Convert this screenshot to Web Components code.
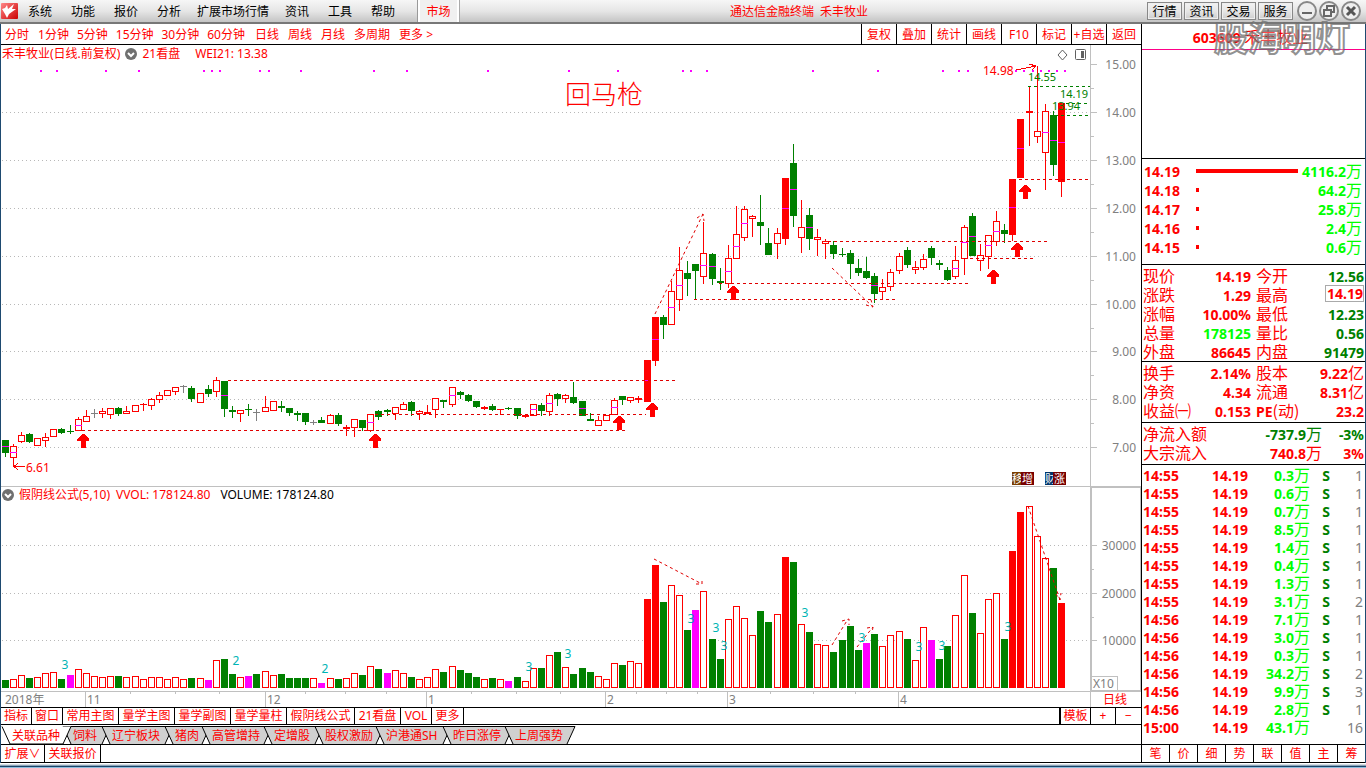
<!DOCTYPE html>
<html lang="zh-CN">
<head>
<meta charset="utf-8">
<title>通达信金融终端 禾丰牧业</title>
<style>
html,body{margin:0;height:100%}
body{font:12px/16px "Noto Sans","Noto Sans CJK SC",sans-serif;color:#f00;background:#fff}
</style>
</head>
<body>
<trading-terminal></trading-terminal>
<script>
const BASE = `*{box-sizing:border-box}
button,a{font:inherit;color:inherit;background:none;border:0;padding:0;margin:0;text-decoration:none;white-space:nowrap;cursor:pointer}
b{font:700 14px/18px "Noto Sans","Noto Sans CJK SC",sans-serif}
.g{color:#008000}.l{color:#0f0}`;
function define(name, css, html) {
  customElements.define(name, class extends HTMLElement {
    connectedCallback() {
      if (this.shadowRoot) return;
      const root = this.attachShadow({mode: 'open'});
      root.innerHTML = `<style>${BASE}${css}</style>` + (typeof html === 'function' ? html(this) : html);
    }
  });
}
const each = (list, fn) => list.map(fn).join('');

/* ---------- menu bar ---------- */
define('menu-bar', `
:host{display:flex;height:24px;background:linear-gradient(#f6f6f6,#e6e6e6 50%,#c4c4c4);border-bottom:2px solid #777;color:#000;align-items:center;padding-left:1px;position:relative}
.logo{width:17px;height:16px;margin-right:10px}
nav{display:flex}
nav button{text-align:left;padding-top:1px}
.m{width:43px}.n{width:40px}.w{width:88px}
nav .market{color:#f00;height:22px;width:41px;text-align:center;border-left:2px solid #fff;border-right:2px solid #fff;box-shadow:-1px 0 #999,1px 0 #aaa;background:#f0f0f0;margin-left:4px}
h1{font:inherit;color:#f00;margin:0;flex:1;text-align:center;padding:1px 8px 0 0}
.side{display:flex;gap:2px;padding-right:5px;align-items:center}
.side button{width:35px;height:18px;border:1px solid #888;box-shadow:inset 0 0 0 1px #eee;line-height:17px}
.side .c{width:20px;height:20px;border:0;box-shadow:none}
.side .first{margin-left:2px}
svg{display:block}`,
`<svg class="logo" viewBox="0 0 17 16"><defs><linearGradient id="q" x2="1" y2="1"><stop stop-color="#f88"/><stop offset="1" stop-color="#c00"/></linearGradient></defs><rect width="17" height="16" rx="1" fill="url(#q)"/><path d="M1 6l3-1 2-3 1 4 6-5-2 5 4 0-7 5-2 4-2-4z" fill="#fff"/></svg>
<nav><button class="m">系统</button><button class="m">功能</button><button class="m">报价</button><button class="n">分析</button><button class="w">扩展市场行情</button><button class="m">资讯</button><button class="m">工具</button><button class="m">帮助</button><button class="market">市场</button></nav>
<h1>通达信金融终端&nbsp; 禾丰牧业</h1>
<div class="side"><button>行情</button><button>资讯</button><button>交易</button><button>服务</button>
<button class="c first" aria-label="最小化"><svg viewBox="0 0 20 20"><circle cx="10" cy="10" r="9" fill="#eee" stroke="#888" stroke-width="2"/><path d="M5 12h10" stroke="#666" stroke-width="2"/></svg></button>
<button class="c" aria-label="还原"><svg viewBox="0 0 20 20"><circle cx="10" cy="10" r="9" fill="#eee" stroke="#888" stroke-width="2"/><path d="M8 8V5h7v6h-3M5 9h7v6H5z" fill="none" stroke="#666" stroke-width="2"/></svg></button>
<button class="c" aria-label="关闭"><svg viewBox="0 0 20 20"><circle cx="10" cy="10" r="9" fill="#eee" stroke="#888" stroke-width="2"/><path d="M6 6l8 8M14 6l-8 8" stroke="#555" stroke-width="3"/></svg></button></div>`);

/* ---------- period bar ---------- */
define('period-bar', `
:host{display:flex;height:21px;border-bottom:1px solid #000;background:#fff;align-items:center}
button{padding-top:1px}
.a,.b{display:flex}.a{gap:8px;padding:0 10px 0 4px}.a :first-child{margin-right:1px}.b{gap:9px}
.tools{margin-left:auto;display:flex;height:20px}
.tools button{width:35px;border-left:1px solid #000}`,
`<div class="a">${each(['分时','1分钟','5分钟','15分钟','30分钟','60分钟'], t => `<button>${t}</button>`)}</div>
<div class="b">${each(['日线','周线','月线','多周期','更多 &gt;'], t => `<button>${t}</button>`)}</div>
<div class="tools">${each(['复权','叠加','统计','画线','F10','标记','+自选','返回'], t => `<button>${t}</button>`)}</div>`);

/* ---------- series: colour, high, open/close box, low, mid mark ---------- */
const CANDLES = `g440,440,453,457,446 r444,446,458,467,452 r432,435,442,443 g433,434,442,443 r438,438,446,446 r433,437,441,447 r429,429,437,437 g428,429,433,434 g425,431,432,434 r417,419,431,431,425
r410,416,422,422 x409,413,414,418 r408,411,414,418 r408,408,415,419 g407,408,414,416 r406,411,414,414 r405,405,412,412 s403,404,405,411 r398,399,406,410 r392,395,400,403
r390,390,396,396 r387,387,392,395 x385,386,387,393 g386,388,399,402 r393,393,403,403 g385,389,394,397 r377,380,392,397 g381,381,409,417,395 g406,410,412,418 r410,410,414,422
g404,409,410,416 x409,412,413,421 r396,407,412,412 r401,401,411,411 g401,406,408,412 g408,408,413,416 g411,413,415,421 g413,413,422,425 x420,422,423,425 g417,420,423,423
r414,415,424,424 g413,415,424,426 s425,427,429,436 r419,419,428,437 g420,420,428,431 r414,414,431,432,422 g410,411,417,420 g409,410,412,416 r407,407,414,420 r402,404,410,410
g401,402,411,416 r410,411,414,420 s405,412,414,414 r398,398,410,418 g400,400,402,408 r387,387,405,407,395 g391,392,395,399 g394,395,401,402 g401,401,407,408 s406,407,409,410
g404,406,410,411 s409,409,410,415 g407,408,409,410 g408,408,416,419 s415,415,417,418 r404,404,416,416,409 g403,405,411,416 r393,395,412,416,403 g393,394,399,406 r394,395,399,403
g382,397,403,404 g401,401,416,416,408 g413,419,421,421 r416,420,426,426 r415,415,421,421 r398,400,415,415,407 g396,396,400,405 r397,397,401,403 s396,398,400,403 s360,360,402,402,380
s317,317,361,366,339 g315,317,325,339 r281,291,325,325,307 r247,270,300,311,285 g261,273,279,296 g264,264,271,300 r222,253,277,284,265 g253,254,279,285,266 g268,281,283,290 r245,258,284,288,271
r206,234,259,259,246 r206,209,238,241,223 r215,216,219,237 g195,222,226,245 g228,243,255,255 r228,233,244,259 s178,178,239,245,208 g144,163,216,227,189 r200,227,238,253 g208,215,239,250,227
r229,237,240,256 r239,241,244,259 g241,245,254,259 g248,254,255,257 g250,253,264,279 g259,268,273,276 g257,271,278,279 g273,276,294,303,285 r279,287,292,299 r269,272,287,291
r253,256,271,274 g247,250,265,268 r261,267,270,274 r254,259,268,270 g246,248,258,265 g260,263,265,270 g267,270,280,281 r246,260,277,279,268 r225,227,259,275,242 g213,216,256,256,236
r244,255,261,271 r235,235,257,269,245 r211,221,242,246,231 g224,230,234,243 s179,179,235,241,207 s119,119,178,178,148 s86,111,113,146 r66,131,137,143 r104,111,153,190,132 g111,115,165,176,140 s103,103,182,197,142`.split(/\s+/);
const VOLUMES = `g680 r679 r675 g678 r677 r673 r672 g679 m675 r669 r673 r676 r677 r676 g676 r677 r676 r679 r677 r677 r679 r677 r679 g678 r678 m680 r660 g659 g674 r677 m676 g674 r671 r675 g674 g678 g678 g678 r678 m683 r678 g679
r678 r673 g675 r666 g669 m673 r670 r673 g677 r679 r677 r669 g672 r666 g670 g673 g677 r679 g678 r679 m681 g677 r681 r668 g668 r655 g652 r667 g674 g668 g672 r676 r679 r663 g665 r661 r663
s599 s565 g602 r585 r595 g630 m610 r591 g639 g659 r619 r606 r618 r635 g611 g622 r614 s557 g562 r624 g632 r644 r645 g652 g640 g626 g650 m643 g634 r646 r635 r631 g639 r660 r627 m640 g659 g646 r615 r575 g613 r633 r599 r593 g639 s551 s512 r506 r536 r558 g568 s603`.split(/\s+/);
const COLOR = {g:'#008000', r:'#f00', s:'#f00', x:'#808080', m:'#f0f'};
const left = i => 2 + Math.floor(i * 8.127 + .04);
const rect = (x, y, w, h, f) => `<rect x="${x}" y="${y}" width="${w}" height="${h}" fill="${f}"/>`;
const box = (x, y, h) => h < 3 ? rect(x, y, 7, h, '#f00') : `<rect x="${x + .5}" y="${y + .5}" width="6" height="${h - 1}" fill="#fff" stroke="#f00"/>`;
const grid = y => `<path d="M2 ${y}.5H1090" stroke="#b8b8b8" stroke-dasharray="1 3"/>`;
const level = (x1, x2, y, c = '#e00000') => `<path d="M${x1} ${y}.5H${x2}" stroke="${c}" stroke-dasharray="3 3"/>`;
const text = (x, y, t, extra = '') => `<text x="${x}" y="${y}" ${extra}>${t}</text>`;
const trend = d => `<path d="${d}" stroke="#e00000" stroke-dasharray="3 3" fill="none" shape-rendering="auto"/>`;
const CHART = `:host{display:block;position:relative}
svg.plot{display:block;width:100%;height:auto;shape-rendering:crispEdges}
text{font-size:12px;fill:#808080;text-rendering:auto}
.e{text-anchor:end}.r{fill:#f00}.gr{fill:#008000;font-size:11px}.cy{fill:#00b4b4;text-anchor:middle}
.legend{position:absolute;left:1px;top:1px;display:flex;align-items:center;height:16px}
.legend svg{display:block;width:12px;height:12px}`;
const FOLD = `<button aria-label="展开"><svg viewBox="0 0 12 12"><circle cx="6" cy="6" r="6" fill="#707070"/><path d="M3 5l3 3 3-3" fill="none" stroke="#fff" stroke-width="2"/></svg></button>`;

define('price-chart', CHART + `.legend button{margin:0 5px 0 5px}.wei{margin-left:15px}
.big{font:300 26px "Noto Sans CJK SC",sans-serif;fill:#f00}.tag{font-size:11px;fill:#fff}`, () => {
  const ys = [64,112,160,208,256,304,351,399,447];
  let s = each(ys.slice(1), grid);
  s += rect(1090, 45, 1, 441, '#c0c0c0') + rect(1, 486, 1140, 1, '#c0c0c0');
  ys.forEach((y, k) => {
    s += rect(1091, y, 6, 1, '#c0c0c0') + text(1136, y + 5, (15 - k).toFixed(2), 'class="e"');
    if (k < 8) s += rect(1091, y + 24, 3, 1, '#c0c0c0');
  });
  s += each([40,56,105,138,203,211,219,259,268,300,373,406,487,568,617,682,690,706,812,877,942,958,967,1015,1023,1032,1040,1048,1056,1064], x => rect(x, 70, 2, 2, '#f0f'));
  CANDLES.forEach((c, i) => {
    const k = c[0], x = left(i), [h, t, b, l, m] = c.slice(1).split(',').map(Number);
    s += rect(x + 3, h, 1, l - h, COLOR[k]);
    s += k === 'r' ? box(x, t, b - t) : rect(x, t, 7, b - t, COLOR[k]);
    if (m) s += rect(x, m, 7, 1, '#f0f');
  });
  s += level(228,678,380) + level(82,626,430) + level(375,646,414) + level(719,968,283) + level(694,896,299)
    + level(828,1049,241) + level(964,1036,258) + level(1013,1090,179)
    + level(1028,1090,86,'#008000') + level(1066,1088,103,'#008000') + level(1055,1090,115,'#008000');
  s += each([[83,434],[375,434],[619,416],[652,403],[733,286],[1025,185],[1017,243],[993,270]], p => `<path transform="translate(${p})" d="M-1 0h2l5 5v2h-3v7h-5v-7h-4v-2z" fill="#f00"/>`);
  s += trend('M655 314L703 214M697 218l6-4 1 7') + trend('M832 268L873 307M866 305l7 2-2-7');
  s += `<path d="M1016 70l20-4m-7-2l7 2-4 4M25 466.500H14m4-3l-4 3 4 3" stroke="#f00" fill="none"/>`;
  s += text(983, 75, '14.98', 'class="r"') + text(26, 472, '6.61', 'class="r"')
    + text(1028, 81, '14.55', 'class="gr"') + text(1060, 98, '14.19', 'class="gr"') + text(1052, 110, '13.94', 'class="gr"')
    + text(565, 104, '回马枪', 'class="big"');
  s += rect(1012,472,10,13,'#7b3f00') + text(1012,483,'移','class="tag"') + rect(1021,472,13,13,'#780000') + text(1022,483,'增','class="tag"')
    + rect(1045,472,9,13,'#003468') + text(1045,483,'财','class="tag"') + rect(1053,472,13,13,'#780000') + text(1054,483,'涨','class="tag"');
  s += `<g fill="none" stroke="#606060" shape-rendering="auto"><path d="M1062.500 50l4.500 5-4.500 5-4.500-5z"/><rect x="1075.500" y="49.500" width="10" height="10" rx="1"/><path d="M1082.500 51v7" stroke-width="3"/></g>`;
  return `<svg class="plot" viewBox="1 45 1140 441">${s}</svg>
  <div class="legend">禾丰牧业(日线.前复权)${FOLD}21看盘<span class="wei">WEI21: 13.38</span></div>`;
});

define('volume-chart', CHART + `.legend button{margin-right:5px}.v{margin-left:6px}.k{margin-left:10px;color:#000}`, () => {
  let s = rect(1, 486, 1140, 1, '#c0c0c0') + rect(1, 691, 1140, 1, '#c0c0c0') + rect(1090, 486, 1, 221, '#c0c0c0');
  s += `<rect x="1091" y="487" width="50" height="204" fill="none" stroke="#c0c0c0" stroke-width="2"/>`;
  [545,593,640].forEach((y, k) => {
    s += grid(y) + rect(1091, y, 6, 1, '#c0c0c0') + text(1136, y + 5, 30000 - k * 10000, 'class="e"');
    if (k < 2) s += rect(1091, y + 24, 3, 1, '#c0c0c0');
  });
  s += `<path d="M1091 676.500h26v14" fill="none" stroke="#c0c0c0"/>` + text(1093, 688, 'X10');
  VOLUMES.forEach((v, i) => {
    const y = +v.slice(1);
    s += v[0] === 'r' ? box(left(i), y, 688 - y) : rect(left(i), y, 7, 688 - y, COLOR[v[0]]);
  });
  s += trend('M654 559L702 584M696 584h6v-6') + trend('M832 645L848 619M842 621l7-2v6') + trend('M857 647L873 627M867 628l6-1-1 6') + trend('M1028 506L1060 600M1056 594l4 6 1-7');
  s += each([[65,669,3],[236,665,2],[325,673,2],[529,671,3],[568,658,3],[691,623,3],[716,632,3],[724,650,3],[805,617,3],[862,642,3],[919,651,3],[942,650,3],[1008,631,3]], p => text(p[0], p[1], p[2], 'class="cy"'));
  s += each([[85,'11'],[265,'12'],[426,'1'],[605,'2'],[727,'3'],[898,'4']], p => rect(p[0], 692, 1, 15, '#c0c0c0') + text(p[0] + 2, 704, p[1]));
  s += each([130,175,219,305,345,386,471,516,560,636,666,697,770,813,855], x => rect(x, 692, 1, 2, '#c0c0c0'));
  s += text(5, 704, '2018年') + text(1103, 704, '日线', 'class="r"');
  return `<svg class="plot" viewBox="1 486 1140 221">${s}</svg>
  <div class="legend">${FOLD}假阴线公式(5,10)<span class="v">VVOL: 178124.80</span><span class="k">VOLUME: 178124.80</span></div>`;
});

/* ---------- bottom bars ---------- */
define('indicator-bar', `
:host{display:flex;height:18px;border:solid #000;border-width:1px 0}
button{height:16px;line-height:16px;border-right:1px solid #000}
.end{margin-left:auto;border-left:2px solid #000;display:flex}
.end button:last-child{border:0}`,
`${each([['指标',31],['窗口',31],['常用主图',56],['量学主图',56],['量学副图',56],['量学量柱',56],['假阴线公式',68],['21看盘',46],['VOL',31],['更多',32]], b => `<button style="width:${b[1]}px">${b[0]}</button>`)}
<div class="end"><button style="width:30px">模板</button><button style="width:25px">+</button><button style="width:25px">−</button></div>`);

define('sheet-tab', `
:host{display:block;position:relative;height:18px}
:host([active]){z-index:1}
button{position:relative;width:100%;height:18px;line-height:17px;padding-left:10px;text-align:left;display:block}
svg{position:absolute;left:0;top:0;overflow:visible}`,
el => { const w = +el.getAttribute('w');
  return `<svg width="${w + 9}" height="18"><path d="M0 .5L8 18H${w}L${w + 8} .5z" fill="${el.hasAttribute('active') ? '#fff' : '#d0d0d0'}"/><path d="M${el.hasAttribute('active') ? `0 .5L8 18H${w}L${w + 8} .5` : `8 18L0 .5H${w + 8}L${w} 18`}" fill="none" stroke="#000" stroke-width="1"/></svg><button><slot></slot></button>`; });

define('sheet-tabs', `:host{display:flex;height:20px;padding:1px 0 0 1px;border-bottom:1px solid #000}`,
`${each([['关联品种',61,1],['饲料',39],['辽宁板块',63],['猪肉',37],['高管增持',62],['定增股',51],['股权激励',61],['沪港通SH',67],['昨日涨停',62],['上周强势',62]], t => `<sheet-tab w="${t[1]}" style="width:${t[1]}px"${t[2] ? ' active' : ''}>${t[0]}</sheet-tab>`)}`);

define('extra-bar', `:host{display:flex;height:18px;border-bottom:1px solid #000}button{border-right:1px solid #000;line-height:17px;height:17px;width:56px}.x{width:44px}`,
`<button class="x">扩展∨</button><button>关联报价</button>`);

/* ---------- quote panel ---------- */
define('stock-title', `:host{display:block;height:26px;border-bottom:1px solid #f08;text-align:center;padding:3px 6px 0 0;position:relative}
h2{font:16px/18px "Noto Sans CJK SC",sans-serif;margin:0}h2 b{line-height:1px}
.mark{position:absolute;left:72px;top:-12px;font:700 34px/50px "Noto Sans CJK SC",sans-serif;color:rgba(255,255,255,.3);-webkit-text-stroke:2px rgba(110,110,110,.75);z-index:3;white-space:nowrap}`,
`<h2><b>603609</b> 禾丰牧业</h2><div class="mark">股海明灯</div>`);

const CELLS = `table{border-collapse:collapse;width:100%;table-layout:fixed}td,th{padding:0;font:16px/18px "Noto Sans CJK SC",sans-serif;white-space:nowrap;text-align:right;vertical-align:middle}
th,.t{text-align:left}tr{height:19px}td b,th b{line-height:1px}`;
const amt = v => /[万亿]$/.test(v) ? `<b>${v.slice(0, -1)}</b>${v.slice(-1)}` : `<b>${v}</b>`;

define('order-book', CELLS + `:host{display:block;height:106px;padding:1px 3px 0 2px;border-bottom:1px solid #000}
i{display:block;background:#f00;height:4px;width:3px;margin-top:2px}i.full{width:100%}`,
`<table><colgroup><col style="width:52px"><col style="width:102px"><col></colgroup>
${each([['14.19','4116.2万'],['14.18','64.2万'],['14.17','25.8万'],['14.16','2.4万'],['14.15','0.6万']], (r, k) => `<tr><th scope="row"><b>${r[0]}</b></th><td><i${k ? '' : ' class="full"'}></i></td><td class="l">${amt(r[1])}</td></tr>`)}</table>`);

define('quote-grid', CELLS + `:host{display:block;padding:0 1px 1px 1px;border-bottom:1px solid #000}
:host([pad]){padding-bottom:3px}.box b{display:inline-block;line-height:15px;height:17px;border:1px solid #aaa;padding:0 0 0 1px;vertical-align:top}th.s{padding-left:5px}`,
el => `<table><colgroup><col style="width:50px"><col style="width:58px"><col style="width:48px"><col></colgroup>${each(el.getAttribute('rows').split(';'), r => { const c = r.split(' ');
  return `<tr><th>${c[0]}</th><td class="${c[2]}">${amt(c[1])}</td><th class="s">${c[3].replace('PE', '<b>PE</b>')}</th><td class="${c[5] || ''}">${amt(c[4])}</td></tr>`; })}</table>`);

define('fund-flow', CELLS + `:host{display:block;padding:0 1px 3px 1px;border-bottom:1px solid #000}`,
`<table><colgroup><col style="width:80px"><col style="width:99px"><col></colgroup>
<tr><th>净流入额</th><td class="g">${amt('-737.9万')}</td><td class="g"><b>-3%</b></td></tr>
<tr><th>大宗流入</th><td>${amt('740.8万')}</td><td><b>3%</b></td></tr></table>`);

define('tick-list', CELLS + `:host{display:block;height:280px;padding:0 2px 0 1px;border-bottom:1px solid #000}tr{height:18px}td,th{line-height:16px}.n b{color:#808080;font-weight:400}.s{text-align:center}`,
`<table><colgroup><col style="width:50px"><col style="width:55px"><col style="width:62px"><col style="width:32px"><col></colgroup>
${each('14:55 0.3 1;14:55 0.6 1;14:55 0.7 1;14:55 8.5 1;14:55 1.4 1;14:55 0.4 1;14:55 1.3 1;14:55 3.1 2;14:56 7.1 1;14:56 3.0 1;14:56 0.3 1;14:56 34.2 2;14:56 9.9 3;14:56 2.8 1;15:00 43.1 16'.split(';'), r => { const c = r.split(' ');
  return `<tr><td class="t"><b>${c[0]}</b></td><td><b>14.19</b></td><td class="l">${amt(c[1] + '万')}</td><td class="g s"><b>${c[0] === '15:00' ? '' : 'S'}</b></td><td class="n"><b>${c[2]}</b></td></tr>`; })}</table>`);

define('panel-tabs', `:host{display:flex;height:18px;border-bottom:1px solid #000}button{flex:1;border-right:1px solid #000;line-height:17px}button:last-child{border:0}`,
each([...'笔价细势联值主筹'], t => `<button>${t}</button>`));

define('quote-panel', `:host{display:block;border-left:1px solid #000;border-right:1px solid #1e4a70}.blank{height:109px;border-bottom:1px solid #000}`,
`<stock-title></stock-title><div class="blank"></div><order-book></order-book>
<quote-grid rows="现价 14.19 r 今开 12.56 g;涨跌 1.29 r 最高 14.19 box;涨幅 10.00% r 最低 12.23 g;总量 178125 l 量比 0.56 g;外盘 86645 r 内盘 91479 g"></quote-grid>
<quote-grid pad rows="换手 2.14% r 股本 9.22亿;净资 4.34 r 流通 8.31亿;收益㈠ 0.153 r PE(动) 23.2"></quote-grid>
<fund-flow></fund-flow><tick-list></tick-list><panel-tabs></panel-tabs>`);

define('trading-terminal', `
:host{display:block;min-height:100%}
.body{display:grid;grid-template-columns:minmax(0,1fr) 225px}
main{border-left:1px solid #1e4a70;min-width:0}
footer{height:5px;background:linear-gradient(#fff 0 1px,#d4dce2 1px 2px,#8aa4b8 2px 3px,#1a4468 3px 4px,#8ebcdc 4px)}`,
`<menu-bar></menu-bar><div class="body"><main><period-bar></period-bar><price-chart></price-chart><volume-chart></volume-chart><indicator-bar></indicator-bar><sheet-tabs></sheet-tabs><extra-bar></extra-bar></main><quote-panel></quote-panel></div><footer></footer>`);
</script>
</body>
</html>
